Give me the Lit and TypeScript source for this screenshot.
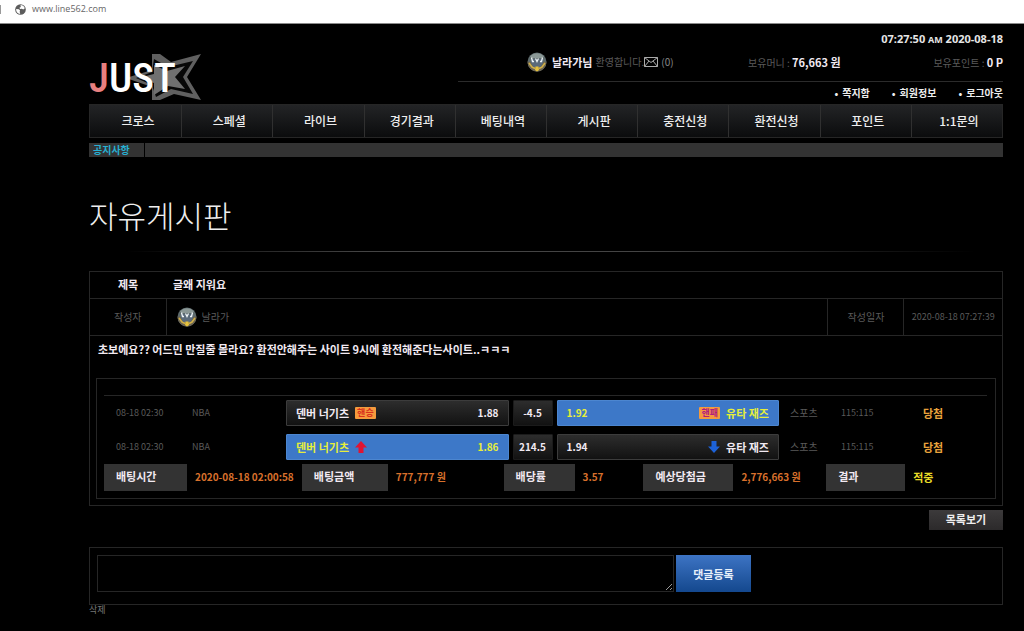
import { LitElement, html, svg, css } from "lit";
import { customElement } from "lit/decorators.js";
import { classMap } from "lit/directives/class-map.js";

interface Side {
  name: string;
  odds: string;
  picked: boolean;
  mark: "win" | "lose" | "up" | "down";
}
interface Bet {
  date: string;
  league: string;
  home: Side;
  line: string;
  away: Side;
  kind: string;
  score: string;
  result: string;
}

const MENU = ["크로스", "스페셜", "라이브", "경기결과", "베팅내역", "게시판", "충전신청", "환전신청", "포인트", "1:1문의"];
const LINKS = ["쪽지함", "회원정보", "로그아웃"];

const BETS: Bet[] = [
  {
    date: "08-18 02:30", league: "NBA",
    home: { name: "덴버 너기츠", odds: "1.88", picked: false, mark: "win" },
    line: "-4.5",
    away: { name: "유타 재즈", odds: "1.92", picked: true, mark: "lose" },
    kind: "스포츠", score: "115:115", result: "당첨",
  },
  {
    date: "08-18 02:30", league: "NBA",
    home: { name: "덴버 너기츠", odds: "1.86", picked: true, mark: "up" },
    line: "214.5",
    away: { name: "유타 재즈", odds: "1.94", picked: false, mark: "down" },
    kind: "스포츠", score: "115:115", result: "당첨",
  },
];

const SUMMARY = [
  { label: "배팅시간", value: "2020-08-18 02:00:58", cls: "s-time" },
  { label: "배팅금액", value: "777,777 원", cls: "s-stake" },
  { label: "배당률", value: "3.57", cls: "s-rate" },
  { label: "예상당첨금", value: "2,776,663 원", cls: "s-payout" },
  { label: "결과", value: "적중", cls: "s-result" },
];

const badge = () => html`<svg class="badge" viewBox="0 0 20 20" aria-hidden="true">
  <circle cx="10" cy="10" r="9.500" fill="#5d6a6c"></circle>
  <path d="M3 4.500a9 9 0 0 1 14 0L15 6H5z" fill="#8b9896"></path>
  <path d="M.6 9.500l3 .5 2.400 4 2.500 1h3l2.500-1 2.400-4 3-.5c.2 5.500-4 10-9.400 10S.4 15 .6 9.500z" fill="#6d6550"></path>
  <path d="M2 11l3 4 3 1.500M18 11l-3 4-3 1.500" fill="none" stroke="#d0b04a" stroke-width="1.600"></path>
  <path d="M4 7h12v4l-2.500 4h-7L4 11z" fill="#5a6a7a"></path>
  <path d="M4.500 5.500l1 4H7M8.500 6.500L10 9.500l1.500-3M13 9.500h1.500l1-4" fill="none" stroke="#eef4f6" stroke-width="1.300"></path>
  <path d="M8.500 14.500h3l.5 3.500-2 1.500L8 18z" fill="#e8c33c"></path>
</svg>`;

const arrow = (dir: "up" | "down") => html`<svg class=${"arrow " + dir} viewBox="0 0 12 12" aria-hidden="true">
  ${dir === "up" ? svg`<path d="M6 0l6 6.500H8.500V12h-5V6.500H0z"></path>` : svg`<path d="M6 12l6-6.500H8.500V0h-5v5.500H0z"></path>`}
</svg>`;

@customElement("app-root")
export class AppRoot extends LitElement {
  static styles = css`
    :host {
      display: block;
      min-height: 100vh;
      background: #000;
      color: #5a5a5a;
      font: 10px/14px "Noto Sans CJK KR", sans-serif;
    }
    * { box-sizing: border-box; }
    a { color: inherit; text-decoration: none; }
    button { border: 0; font: inherit; cursor: pointer; padding: 0; }
    table { border-collapse: collapse; width: 100%; table-layout: fixed; }
    th, td { padding: 0; text-align: left; font-weight: 400; }
    b, .strong { font-weight: 700; font-size: 11px; color: #f2eaf2; }

    .address {
      display: flex;
      align-items: center;
      height: 24px;
      padding: 0 0 5px;
      background: #fff;
      border-bottom: 1px solid #8a8a8a;
      color: #666;
      font: 9px/14px "Open Sans", sans-serif;
    }
    .tab-edge { width: 1px; height: 9px; background: #999; margin-right: 14px; }
    .globe { width: 11px; height: 11px; margin-right: 6px; }

    .page { padding: 0 21px 12px 89px; }

    header { display: flex; justify-content: space-between; height: 80px; padding-top: 8px; }
    .logo { position: relative; width: 113px; height: 48px; margin-top: 22px; display: block; }
    .star { display: block; width: 100%; height: 100%; }
    .word {
      position: absolute;
      left: 0;
      top: 0;
      font: 500 41px/48px "Roboto Condensed", Lato, sans-serif;
      color: #fff;
    }
    .word .j { color: #e88080; }
    .account { width: 545px; }
    .clock { text-align: right; font: 700 11px/14px "Noto Sans", sans-serif; color: #e6e6e6; }
    .clock small { font-size: 9px; }
    .status {
      display: grid;
      grid-template-columns: 221px 1fr auto;
      align-items: center;
      padding: 0 0 4px 69px;
      height: 35px;
      border-bottom: 1px solid #2b2b2b;
    }
    .who { display: flex; align-items: center; }
    .who b { margin: 0 3px 0 5px; }
    .badge { width: 20px; height: 20px; flex: none; }
    .mail { width: 14px; height: 10px; margin: 0 3px 0 0; }
    .count { color: #888; }
    .links { display: flex; justify-content: flex-end; gap: 22px; padding-top: 4px; }
    .links a { font-weight: 700; color: #eee; font-size: 10px; }
    .links a::before { content: "•"; margin-right: 4px; font-size: 10px; }

    nav { display: flex; height: 34px; border: 1px solid #262626; background: linear-gradient(#232426, #0b0c0d); }
    nav a {
      flex: 1;
      display: grid;
      place-items: center;
      padding-left: 4px;
      border-left: 1px solid #303030;
      color: #eee;
      font-size: 12px;
      font-weight: 500;
    }
    nav a:first-child { border-left-color: transparent; }

    .notice { display: flex; height: 14px; margin-top: 5px; background: #333; }
    .notice a { width: 56px; padding-left: 4px; border-right: 1px solid #000; color: #27b0d2; font-weight: 700; line-height: 14px; font-size: 10px; }

    h1 { margin: 35px 0 13px; font-size: 31px; line-height: 46px; font-weight: 300; color: #eee; }
    .rule { height: 1px; background: linear-gradient(90deg, transparent 4%, #444 30%, #444 60%, transparent 97%); }

    .post { margin-top: 19px; border: 1px solid #262626; }
    .post-head th { text-align: center; }
    .post-head .top { height: 26px; }
    .post-head .info { height: 37px; border-top: 1px solid #262626; border-bottom: 1px solid #262626; }
    .post-head .top > * { padding-bottom: 2px; }
    .info > * + * { border-left: 1px solid #262626; }
    .c-label { width: 76px; }
    .c-stamp { width: 98px; }
    .post-head .subject { padding-left: 7px; }
    .author { display: flex; align-items: center; gap: 5px; padding-left: 10px; }
    .post-head .stamp { text-align: center; font-size: 9px; }
    .text { margin: 0; padding: 6px 8px 0; }

    .slip { margin: 22px 6px 6px; border: 1px solid #262626; padding: 16px 8px 7px 7px; }
    .bets { border-top: 1px solid #262626; margin-bottom: 1px; }
    .bets td { height: 34px; padding-top: 2px; }
    .bets .date { padding-left: 12px; font-size: 9px; }
    .bets .small { font-size: 9px; }
    .bets .pad { padding-left: 7px; }
    .c-date { width: 88px; }
    .c-league { width: 94px; }
    .c-line { width: 44px; }
    .c-kind { width: 51px; }
    .c-score { width: 82px; }
    .c-result { width: 71px; }
    .bets .gap { padding-right: 4px; }
    .bets .won { color: #e8a23c; font-weight: 700; font-size: 11px; padding-left: 7px; }
    .box {
      display: flex;
      align-items: center;
      height: 26px;
      padding: 0 9px;
      border: 1px solid #3c3c3c;
      border-radius: 1px;
      background: linear-gradient(#2d2d2d, #121212);
      color: #f2eaf2;
      font-weight: 700;
      font-size: 11px;
    }
    .box .push { margin-left: auto; }
    .box.mid { padding: 0; justify-content: center; border-color: #1b1b1b; font-size: 10px; }
    .box.picked { background: #3d78c8; border-color: #4c86d0; color: #e6ee3a; }
    .box .odds { font-size: 10px; }
    .side { display: flex; align-items: center; gap: 6px; }
    .tag { padding: 0 2px; background: #f59a3c; border-radius: 1px; color: #d8301c; font-size: 9px; line-height: 12px; }
    .tag.lose { color: #b01c80; }
    .arrow { width: 12px; height: 12px; }
    .up { fill: #e01432; }
    .down { fill: #1d62d8; }

    .summary { display: grid; grid-template-columns: 198fr 202fr 140fr 183fr 161fr; margin: 0; }
    .summary div { display: flex; align-items: center; gap: 8px; white-space: nowrap; }
    .summary dt { height: 27px; padding-left: 12px; background: #333; color: #f2eaf2; font-weight: 700; font-size: 11px; line-height: 25px; }
    .summary dd { margin: 0; padding-bottom: 2px; color: #d8702c; font-weight: 700; font-size: 10px; }
    .s-time dt { width: 83px; }
    .s-stake dt { width: 86px; }
    .s-rate dt { width: 71px; }
    .s-payout dt { width: 90px; }
    .s-result dt { width: 79px; }
    .s-result dd { color: #e8dc28; font-size: 11px; }

    .actions { display: flex; justify-content: flex-end; margin: 4px 0 17px; }
    .list { width: 74px; height: 20px; padding-bottom: 2px; background: linear-gradient(#3c3a3b, #2c2a2b); color: #eee; font-weight: 700; font-size: 11px; }

    .comment { display: flex; gap: 2px; border: 1px solid #262626; padding: 7px 7px 12px; }
    textarea { display: block; width: 577px; height: 37px; margin: 0; background: #000; border: 1px solid #262626; color: #ccc; font: inherit; outline: 0; }
    .submit { width: 75px; height: 37px; background: linear-gradient(#3d74c4, #14488e); color: #e8f0fa; font-weight: 700; font-size: 11px; }
    .delete { display: block; margin-top: -2px; font-size: 9px; color: #777; }
  `;

  private mark(side: Side) {
    if (side.mark === "win") return html`<span class="tag">핸승</span>`;
    if (side.mark === "lose") return html`<span class="tag lose">핸패</span>`;
    return arrow(side.mark);
  }

  private row(b: Bet) {
    return html`<tr>
      <td class="date">${b.date}</td>
      <td class="small">${b.league}</td>
      <td class="gap"><div class=${classMap({ box: true, picked: b.home.picked })}>
        <span class="side">${b.home.name}${this.mark(b.home)}</span><span class="odds push">${b.home.odds}</span>
      </div></td>
      <td class="gap"><div class="box mid">${b.line}</div></td>
      <td class="gap"><div class=${classMap({ box: true, picked: b.away.picked })}>
        <span class="odds">${b.away.odds}</span><span class="side push">${this.mark(b.away)}${b.away.name}</span>
      </div></td>
      <td class="pad">${b.kind}</td>
      <td class="pad small">${b.score}</td>
      <td class="won">${b.result}</td>
    </tr>`;
  }

  render() {
    return html`
      <div class="address">
        <span class="tab-edge"></span>
        <svg class="globe" viewBox="0 0 12 12" aria-hidden="true">
          <circle cx="6" cy="6" r="5.800" fill="#5c5c5c"></circle>
          <path d="M1.300 5.500l3 .3 1.200 1.200-.4 1.500.6 2.300C3 10.800 1 8.500 1.300 5.500zM6 1.200c2 0 4 1.300 4.700 3.300L9 6 7.500 5.300 5.500 5.500 4.800 4l1.500-.8z" fill="#fff"></path>
        </svg>
        <span>www.line562.com</span>
      </div>
      <div class="page">
        <header>
          <a class="logo" href="#" aria-label="JUST">
            <svg class="star" viewBox="0 0 113 48" aria-hidden="true">
              <path d="M63 0h8l11 8 30-8-14 23 14 23-27-6-14 6h-8V33L37 24l26-8z" fill="#606060"></path>
              <path d="M65 5l14 8 25-6-10 16 10 17-22-5-15 8-4-12-16-7 16-6z" fill="#080808"></path>
              <path d="M65 11l13 6 18-5-10 11 10 12-17-3-14 9V29l-16-5 16-4z" fill="#707070"></path>
            </svg>
            <span class="word"><span class="j">J</span>UST</span>
          </a>
          <div class="account">
            <div class="clock">07:27:50 <small>AM</small> 2020-08-18</div>
            <div class="status">
              <span class="who">${badge()}<b>날라가님</b>환영합니다.
                <svg class="mail" viewBox="0 0 14 10" aria-hidden="true">
                  <path d="M.5.5h13v9H.5zl6.500 5 6.500-5M.5 9.500L5 4M13.500 9.500L9 4" fill="none" stroke="#aaa"></path>
                </svg><span class="count">(0)</span></span>
              <span>보유머니 : <b>76,663 원</b></span>
              <span>보유포인트 : <b>0 P</b></span>
            </div>
            <div class="links">${LINKS.map((l) => html`<a href="#">${l}</a>`)}</div>
          </div>
        </header>
        <nav>${MENU.map((m) => html`<a href="#">${m}</a>`)}</nav>
        <div class="notice"><a href="#">공지사항</a></div>

        <h1>자유게시판</h1>
        <div class="rule"></div>

        <section class="post">
          <table class="post-head">
            <colgroup><col class="c-label"><col><col class="c-label"><col class="c-stamp"></colgroup>
            <tr class="top"><th class="strong">제목</th><td class="subject strong" colspan="3">글왜 지워요</td></tr>
            <tr class="info">
              <th>작성자</th>
              <td><span class="author">${badge()}날라가</span></td>
              <th>작성일자</th>
              <td class="stamp">2020-08-18 07:27:39</td>
            </tr>
          </table>
          <p class="text strong">초보에요?? 어드민 만질줄 몰라요? 환전안해주는 사이트 9시에 환전해준다는사이트..ㅋㅋㅋ</p>
          <div class="slip">
            <table class="bets">
              <colgroup>
                <col class="c-date"><col class="c-league"><col><col class="c-line"><col>
                <col class="c-kind"><col class="c-score"><col class="c-result">
              </colgroup>
              ${BETS.map((b) => this.row(b))}
            </table>
            <dl class="summary">
              ${SUMMARY.map((s) => html`<div class=${s.cls}><dt>${s.label}</dt><dd>${s.value}</dd></div>`)}
            </dl>
          </div>
        </section>
        <div class="actions"><button class="list" type="button">목록보기</button></div>
        <form class="comment" @submit=${(e: Event) => e.preventDefault()}>
          <textarea aria-label="댓글"></textarea>
          <button class="submit" type="submit">댓글등록</button>
        </form>
        <a class="delete" href="#">삭제</a>
      </div>
    `;
  }
}
